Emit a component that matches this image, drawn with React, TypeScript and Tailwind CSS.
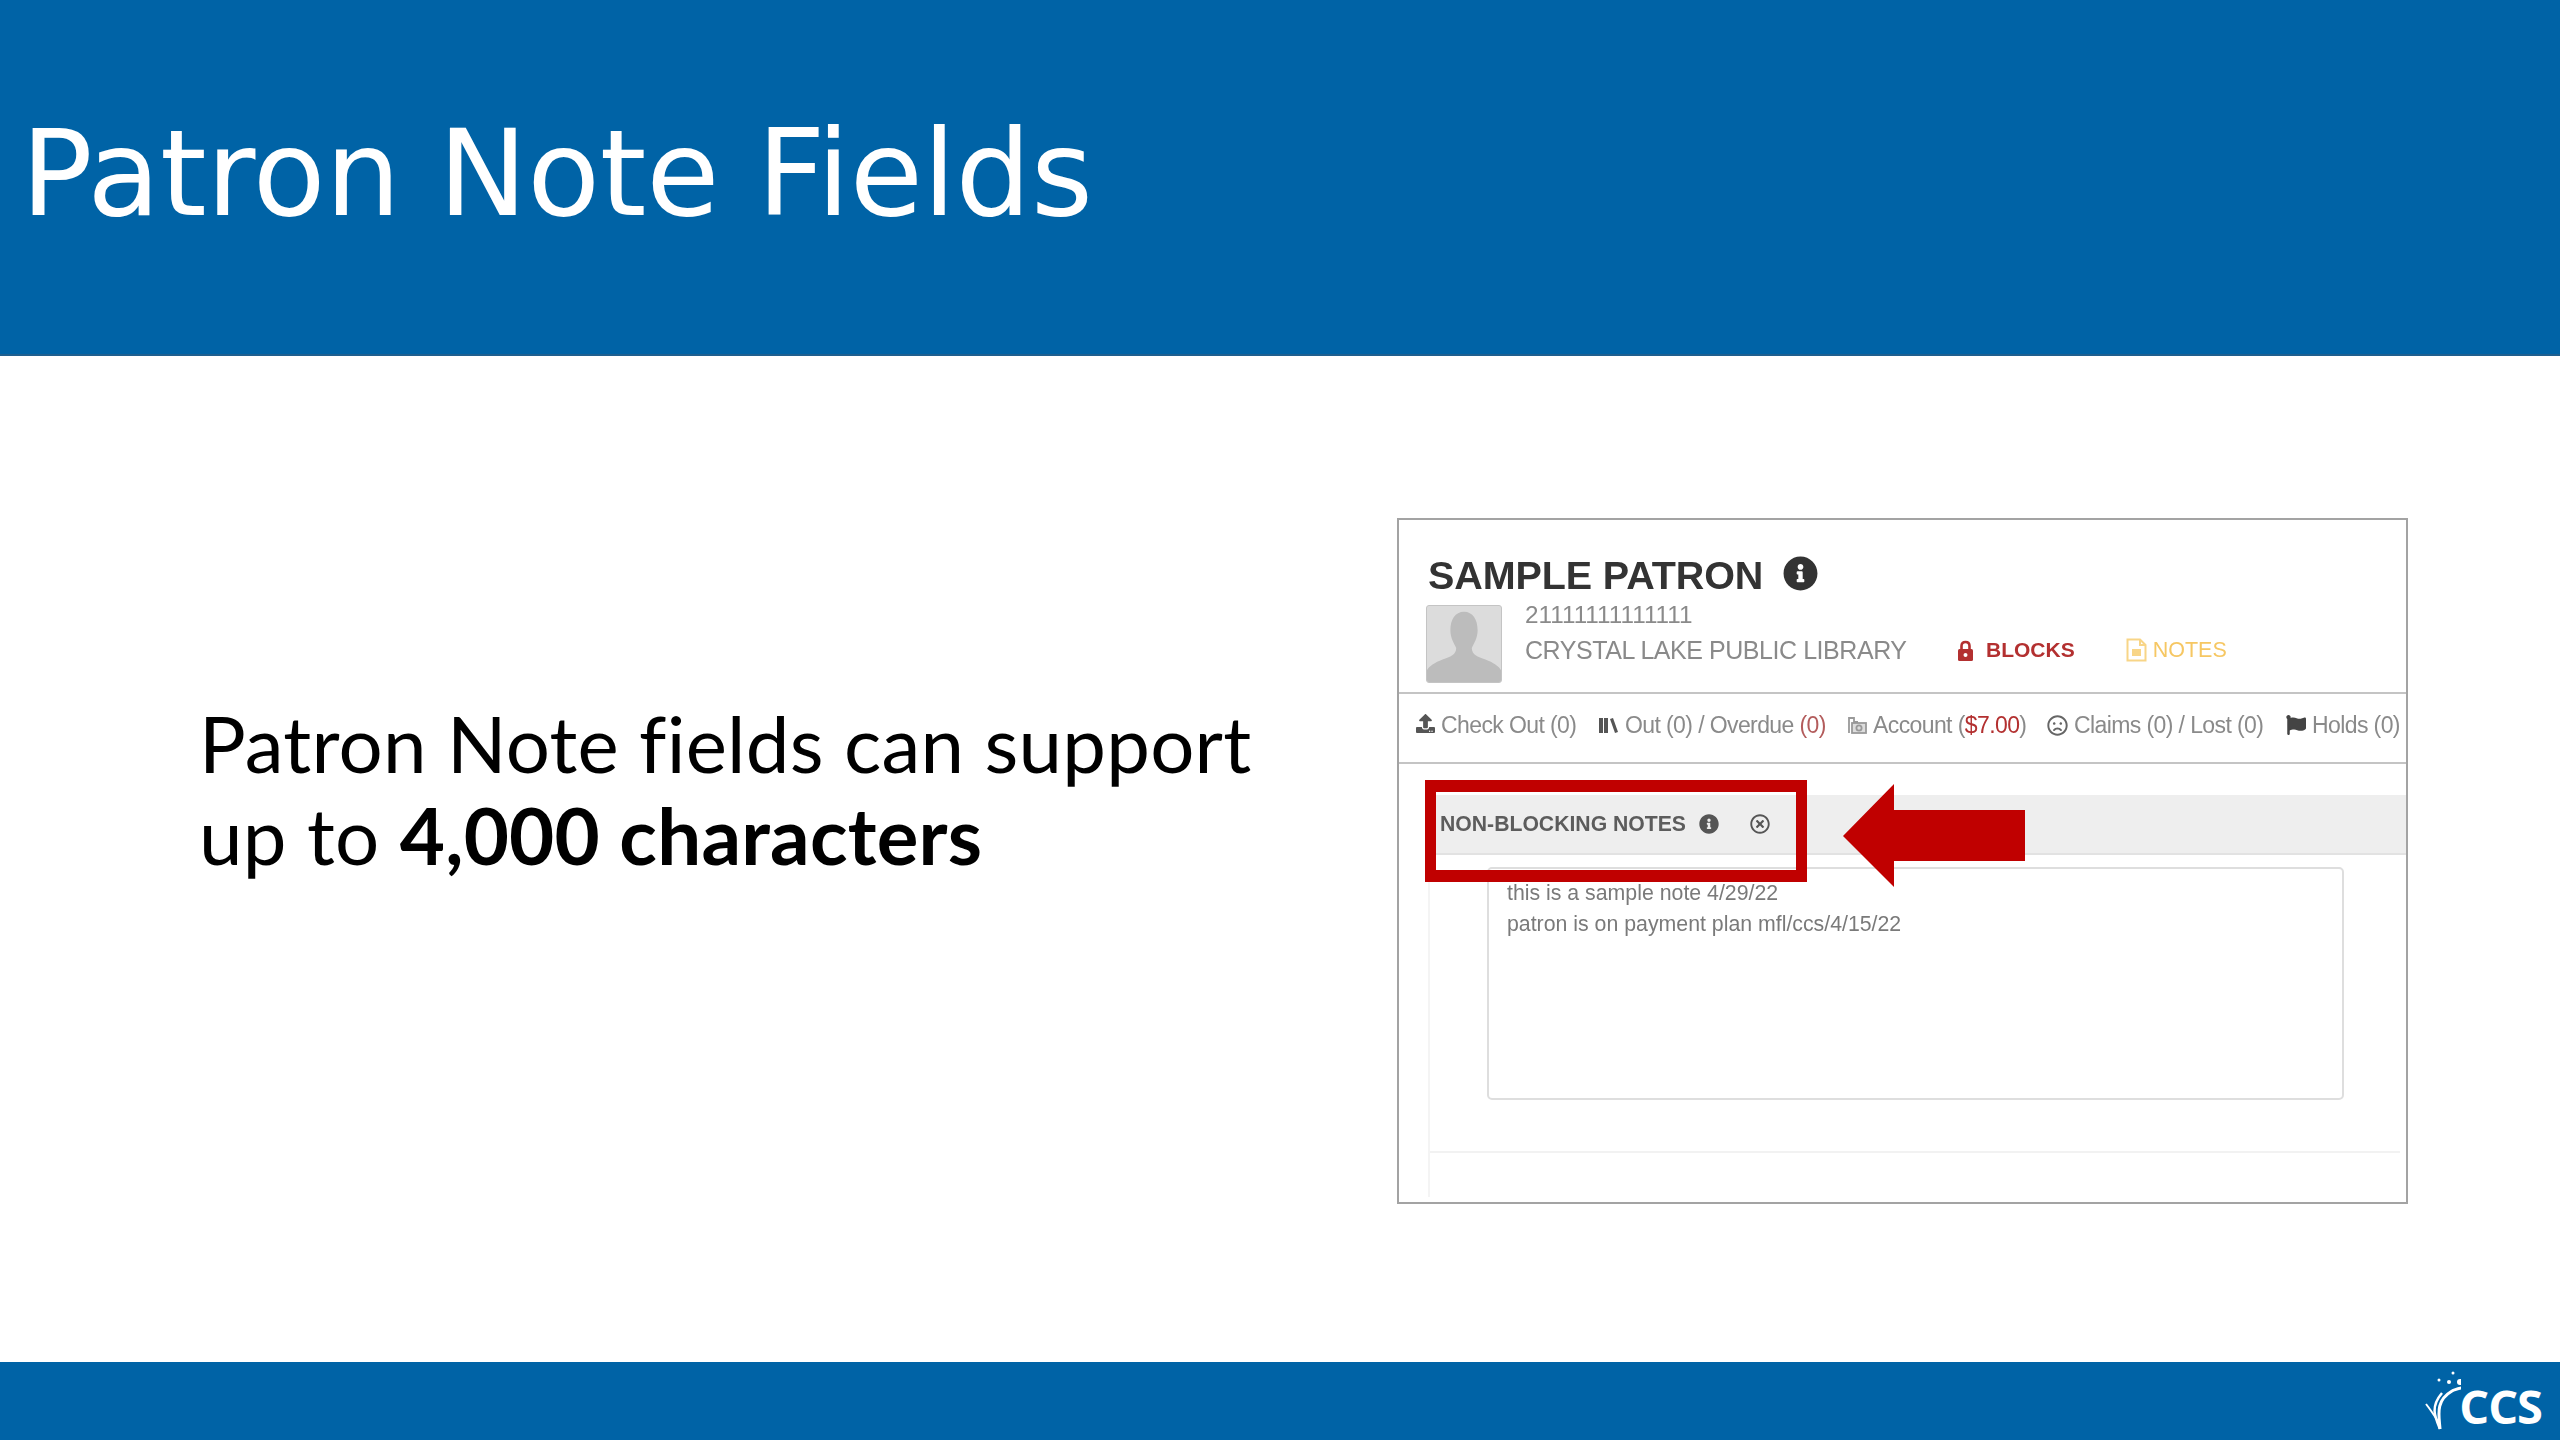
import React from "react";
import { FaInfoCircle, FaUpload, FaRegFrown, FaFlag, FaRegTimesCircle } from "react-icons/fa";

const sans = "font-['Liberation_Sans',Arial,sans-serif]";

function BooksIcon() {
  return (
    <svg viewBox="0 0 20 16" className="w-[20px] h-[16px] fill-[#555] shrink-0">
      <rect x="0" y="1" width="4" height="15" />
      <rect x="5" y="1" width="4" height="15" />
      <path d="M11 2 L14 1 L19 15 L16 16 Z" />
    </svg>
  );
}

function MoneyIcon() {
  return (
    <svg viewBox="0 0 20 20" className="w-[20px] h-[20px] stroke-[#999] fill-none shrink-0" strokeWidth="1.8">
      <path d="M2 18 V3 h5 v15 M7 7 h4" />
      <rect x="5" y="8" width="14" height="10" fill="#ddd" />
      <circle cx="12" cy="13" r="2.6" />
    </svg>
  );
}

function NoteIcon() {
  return (
    <svg viewBox="0 0 21 24" className="w-[21px] h-[24px]">
      <path d="M1.5 1.5 H14 L19.5 7 V22.5 H1.5 Z" fill="#fff" stroke="#f8d587" strokeWidth="2" />
      <path d="M14 1.5 V7 H19.5" fill="none" stroke="#f8d587" strokeWidth="2" />
      <rect x="6" y="11" width="9" height="7" fill="#f8d587" />
    </svg>
  );
}

function LockIcon() {
  return (
    <svg viewBox="0 0 15 21" className="w-[15px] h-[21px] shrink-0">
      <path d="M3.5 10 V6 C3.5 3.4 5 2 7.5 2 C10 2 11.5 3.4 11.5 6 V10" fill="none" stroke="#b33030" strokeWidth="2.6" />
      <rect x="0" y="9" width="15" height="12" rx="1.5" fill="#b33030" />
      <circle cx="7.5" cy="15" r="2" fill="#fff" />
    </svg>
  );
}

function Avatar() {
  return (
    <div className="w-[76px] h-[78px] rounded-[3px] bg-[#dcdcdc] border border-[#c4c4c4] overflow-hidden shrink-0">
      <svg viewBox="0 0 76 78" className="w-full h-full">
        <path
          d="M38 6 C47 6 52 14 52 25 C52 33 48 39 46 43 C46 50 52 52 60 55 C68 58 74 62 76 66 V78 H0 V66 C2 62 8 58 16 55 C24 52 30 50 30 43 C28 39 24 33 24 25 C24 14 29 6 38 6 Z"
          fill="#bcbcbc"
        />
      </svg>
    </div>
  );
}

function CcsLogo() {
  return (
    <div className="flex items-end">
      <svg viewBox="0 0 36 60" className="w-[36px] h-[60px] fill-none stroke-white">
        <path d="M15 58 C14 44 10 30 27 20 C30 18 36 17 40 16" strokeWidth="3" />
        <path d="M15 58 C10 46 5 36 17 22" strokeWidth="2.5" />
        <path d="M14 52 C9 44 5 38 1 33" strokeWidth="2" />
        <circle cx="14" cy="9" r="1.5" fill="#fff" strokeWidth="0" />
        <circle cx="24" cy="11" r="2" fill="#fff" strokeWidth="0" />
        <circle cx="35" cy="11" r="3" fill="#fff" strokeWidth="0" />
        <circle cx="28" cy="2" r="1.5" fill="#fff" strokeWidth="0" />
      </svg>
      <span className="font-['Open_Sans',sans-serif] font-bold text-[47px] leading-[50px] text-white tracking-[-1px] -ml-[2px]">
        CCS
      </span>
    </div>
  );
}

function PatronPanel() {
  return (
    <div className="relative w-[1011px] h-[686px] border-2 border-[#a3a3a3] bg-white">
      <div className={`${sans} blur-[0.5px]`}>
        <div className="h-[174px] border-b-2 border-[#c4c4c4] pl-[29px] pt-[37px]">
          <div className="flex items-center h-[36px]">
            <span className="text-[39.5px] leading-[36px] font-bold text-[#333] tracking-[-0.1px]">SAMPLE PATRON</span>
            <FaInfoCircle className="ml-[20px] text-[35px] text-[#333] -mt-[3px]" />
          </div>
          <div className="flex mt-[12px] -ml-[2px]">
            <Avatar />
            <div className="ml-[23px] text-[#8a8a8a]">
              <div className="text-[24.3px] leading-[30px] h-[33px] -mt-[5px]">21111111111111</div>
              <div className="flex items-center h-[34px]">
                <span className="text-[25px] leading-[34px] w-[433px] tracking-[-0.45px] whitespace-nowrap">CRYSTAL LAKE PUBLIC LIBRARY</span>
                <LockIcon />
                <span className="ml-[13px] text-[21px] font-bold text-[#b33030]">BLOCKS</span>
                <span className="ml-[51px]"><NoteIcon /></span>
                <span className="ml-[6px] text-[21.5px] text-[#f6c763]">NOTES</span>
              </div>
            </div>
          </div>
        </div>
        <div className="h-[70px] border-b-2 border-[#c4c4c4] flex items-center pl-[17px] pb-[6px] text-[23px] text-[#8a8a8a] tracking-[-0.6px] whitespace-nowrap">
          <FaUpload className="text-[19px] text-[#555] mr-[6px] -mt-[3px] shrink-0" />
          <span className="w-[158px]">Check Out (0)</span>
          <BooksIcon />
          <span className="ml-[6px] w-[222px]">Out (0) / Overdue <span className="text-[#b35c5c]">(0)</span></span>
          <MoneyIcon />
          <span className="ml-[6px] w-[174px]">Account (<span className="text-[#b33030]">$7.00</span>)</span>
          <FaRegFrown className="text-[21px] text-[#666] shrink-0" />
          <span className="ml-[6px] w-[212px]">Claims (0) / Lost (0)</span>
          <FaFlag className="text-[20px] text-[#444] shrink-0" />
          <span className="ml-[6px]">Holds (0)</span>
        </div>
        <div className="mt-[31px] ml-[29px] h-[60px] bg-[#eeeeee] border-b-2 border-[#e2e2e2] flex items-center pl-[12px]">
          <span className="text-[21.2px] font-bold text-[#5c5c5c]">NON-BLOCKING NOTES</span>
          <FaInfoCircle className="ml-[13px] text-[20px] text-[#555]" />
          <FaRegTimesCircle className="ml-[31px] text-[20px] text-[#555]" />
        </div>
        <div className="ml-[29px] border-l-2 border-[#f4f4f4] h-[342px] relative">
          <div className="ml-[57px] mt-[12px] w-[857px] h-[233px] border-2 border-[#dedede] rounded-[5px] pl-[18px] pt-[9px] text-[21.3px] leading-[31px] text-[#7a7a7a] float-left">
            <div>this is a sample note 4/29/22</div>
            <div>patron is on payment plan mfl/ccs/4/15/22</div>
          </div>
          <div className="clear-both pt-[51px]">
            <div className="border-t-2 border-[#f2f2f2] mr-[6px]" />
          </div>
        </div>
      </div>
      <div className="absolute left-[26px] top-[260px] w-[382px] h-[102px] border-x-[11px] border-y-[12px] border-[#c00000]" />
      <svg viewBox="0 0 182 103" className="absolute left-[444px] top-[264px] w-[182px] h-[103px] fill-[#c00000]">
        <path d="M0 52 L51 0 V26 H182 V77 H51 V103 Z" />
      </svg>
    </div>
  );
}

export default function App() {
  return (
    <div className="w-[2560px] h-[1440px] flex flex-col bg-white overflow-hidden">
      <header className="h-[356px] bg-[#0063a6] pl-[21px] pt-[102px] border-b-2 border-[#1f5f8f]">
        <h1 className="font-['DejaVu_Sans',Verdana,sans-serif] text-[119px] leading-[144px] text-white tracking-[-0.15px]">
          Patron Note Fields
        </h1>
      </header>
      <main className="flex-1 flex justify-between pl-[199px] pr-[152px]">
        <p className="mt-[341px] font-['Lato',sans-serif] text-[78px] leading-[92px] text-black tracking-[0.25px]">
          Patron Note fields can support
          <br />
          up to <strong className="font-bold">4,000 characters</strong>
        </p>
        <div className="mt-[162px]">
          <PatronPanel />
        </div>
      </main>
      <footer className="h-[78px] bg-[#0063a6] flex items-center justify-end pr-[18px]">
        <CcsLogo />
      </footer>
    </div>
  );
}
